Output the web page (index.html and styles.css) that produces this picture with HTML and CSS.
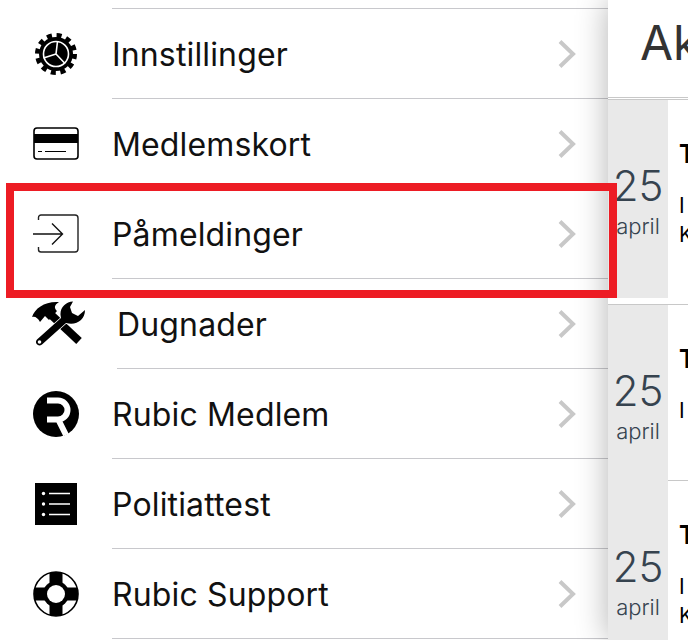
FILE: index.html
```html
<!doctype html>
<html>
  <head>
    <meta charset="UTF-8" />
    <title>Rubic</title>
    <link rel="stylesheet" href="styles.css">
  </head>
  <body>
    <div class="app">
      <!-- side menu -->
      <div class="menu">
        <div class="menu-top"></div>

        <div class="menu-row">
          <div class="menu-icon">
            <svg width="46" height="46" viewBox="0 0 46 46">
              <circle cx="23" cy="23" r="18.5" fill="none" stroke="#000" stroke-width="5" stroke-dasharray="5 4.69" />
              <circle cx="23" cy="23" r="17" fill="#000" />
              <circle cx="23" cy="23" r="12.5" fill="none" stroke="#fff" stroke-width="1.6" />
              <path d="M23 23 L24.5 10.5 M23 23 L10.5 27 M23 23 L32 32.5" stroke="#fff" stroke-width="1.6" fill="none" />
            </svg>
          </div>
          <div class="menu-body">
            <span class="menu-label">Innstillinger</span>
            <svg class="chevron" width="18" height="28" viewBox="0 0 18 28"><path d="M2 1.5 L15 14 L2 26.5" /></svg>
          </div>
        </div>

        <div class="menu-row">
          <div class="menu-icon">
            <svg width="46" height="34" viewBox="0 0 46 34">
              <rect x="1" y="1" width="44" height="31" rx="3" fill="none" stroke="#000" stroke-width="1.6" />
              <rect x="1" y="7" width="44" height="9" fill="#000" />
              <path d="M5 24.5 H9 M12 24.5 H33" stroke="#000" stroke-width="1.2" />
            </svg>
          </div>
          <div class="menu-body">
            <span class="menu-label">Medlemskort</span>
            <svg class="chevron" width="18" height="28" viewBox="0 0 18 28"><path d="M2 1.5 L15 14 L2 26.5" /></svg>
          </div>
        </div>

        <div class="menu-row">
          <div class="menu-icon">
            <svg width="46" height="40" viewBox="0 0 46 40">
              <path d="M5.5 6 V3.5 a2.5 2.5 0 0 1 2.5 -2.5 H42 a3 3 0 0 1 3 3 V35 a3 3 0 0 1 -3 3 H8 a2.5 2.5 0 0 1 -2.5 -2.5 V33" fill="none" stroke="#222" stroke-width="1.4" />
              <path d="M0 20 H29 M19 9.5 L29.5 20 L19 30.5" fill="none" stroke="#111" stroke-width="1.4" />
            </svg>
          </div>
          <div class="menu-body">
            <span class="menu-label">Påmeldinger</span>
            <svg class="chevron" width="18" height="28" viewBox="0 0 18 28"><path d="M2 1.5 L15 14 L2 26.5" /></svg>
          </div>
        </div>

        <div class="menu-row menu-row-wide">
          <div class="menu-icon">
            <svg width="54" height="46" viewBox="0 0 54 46">
              <!-- hammer -->
              <path d="M15 10 L47 40" stroke="#000" stroke-width="8" fill="none" />
              <path d="M0 16 C3 7 13 0 27 1 C22 4 22 7 25 10 L17 19 L13 15 L8 21 C6 17 3 15 0 16 Z" fill="#000" />
              <!-- wrench -->
              <path d="M41 0.5 C34 1 28 6 28.5 14 L29 17 L5 38.5 C2 42 6 46.5 10 43.5 L34 22 C44 25 53 19 53 9 L46 15 L40 12 L38 6 Z" fill="#000" stroke="#fff" stroke-width="1.5" paint-order="stroke" />
              <circle cx="7.5" cy="41" r="1.8" fill="#fff" />
            </svg>
          </div>
          <div class="menu-body">
            <span class="menu-label">Dugnader</span>
            <svg class="chevron" width="18" height="28" viewBox="0 0 18 28"><path d="M2 1.5 L15 14 L2 26.5" /></svg>
          </div>
        </div>

        <div class="menu-row">
          <div class="menu-icon">
            <svg width="46" height="46" viewBox="0 0 46 46">
              <circle cx="23" cy="23" r="23" fill="#000" />
              <path d="M14 9.5 H25 a9.5 9.5 0 0 1 0 19 H14 M25 28 L33 44" fill="none" stroke="#fff" stroke-width="6" />
            </svg>
          </div>
          <div class="menu-body">
            <span class="menu-label">Rubic Medlem</span>
            <svg class="chevron" width="18" height="28" viewBox="0 0 18 28"><path d="M2 1.5 L15 14 L2 26.5" /></svg>
          </div>
        </div>

        <div class="menu-row">
          <div class="menu-icon">
            <svg width="42" height="42" viewBox="0 0 42 42">
              <rect width="42" height="42" fill="#000" />
              <circle cx="8.5" cy="10.5" r="1.7" fill="#fff" />
              <circle cx="8.5" cy="21" r="1.7" fill="#fff" />
              <circle cx="8.5" cy="31.5" r="1.7" fill="#fff" />
              <path d="M14 10.5 H35 M14 21 H35 M14 31.5 H35" stroke="#fff" stroke-width="1.5" />
            </svg>
          </div>
          <div class="menu-body">
            <span class="menu-label">Politiattest</span>
            <svg class="chevron" width="18" height="28" viewBox="0 0 18 28"><path d="M2 1.5 L15 14 L2 26.5" /></svg>
          </div>
        </div>

        <div class="menu-row">
          <div class="menu-icon">
            <svg width="46" height="46" viewBox="0 0 46 46">
              <clipPath id="buoy"><circle cx="23" cy="23" r="22" /></clipPath>
              <circle cx="23" cy="23" r="22" fill="#fff" stroke="#000" stroke-width="1.6" />
              <g clip-path="url(#buoy)">
                <rect x="16.5" y="0" width="13" height="46" fill="#000" />
                <rect x="0" y="16.5" width="46" height="13" fill="#000" />
              </g>
              <circle cx="23" cy="23" r="13" fill="#000" />
              <circle cx="23" cy="23" r="9" fill="#fff" />
            </svg>
          </div>
          <div class="menu-body">
            <span class="menu-label">Rubic Support</span>
            <svg class="chevron" width="18" height="28" viewBox="0 0 18 28"><path d="M2 1.5 L15 14 L2 26.5" /></svg>
          </div>
        </div>
      </div>

      <!-- main panel -->
      <div class="panel">
        <div class="panel-header">Ak</div>

        <div class="event event-first">
          <div class="event-date">
            <span class="event-day">25</span>
            <span class="event-month">april</span>
          </div>
          <div class="event-info">
            <div class="event-title">T</div>
            <div class="event-text">I<br />K</div>
          </div>
        </div>

        <div class="event event-second">
          <div class="event-date">
            <span class="event-day">25</span>
            <span class="event-month">april</span>
          </div>
          <div class="event-info">
            <div class="event-title">T</div>
            <div class="event-text">I</div>
          </div>
        </div>

        <div class="event">
          <div class="event-date">
            <span class="event-day">25</span>
            <span class="event-month">april</span>
          </div>
          <div class="event-info">
            <div class="event-title">T</div>
            <div class="event-text">I<br />K</div>
          </div>
        </div>
      </div>

      <!-- highlight -->
      <div class="highlight"></div>
    </div>
  </body>
</html>
```

FILE: styles.css
```css
html,
body {
  margin: 0;
  height: 100%;
  overflow: hidden;
  background: #fff;
}

body {
  font-family: 'Inter', 'Liberation Sans', sans-serif;
  color: #000;
}

.app {
  position: relative;
  display: flex;
  width: 688px;
  height: 640px;
  overflow: hidden;
}

/* menu */
.menu {
  flex: 0 0 608px;
  width: 608px;
}
.menu-top {
  height: 8px;
  margin-left: 112px;
  border-bottom: 1px solid #c8c8cc;
}
.menu-row {
  display: flex;
  height: 90px;
}
.menu-icon {
  flex: 0 0 112px;
  display: flex;
  align-items: center;
  justify-content: center;
  padding-bottom: 1px;
  box-sizing: border-box;
}
.menu-row-wide .menu-icon {
  flex-basis: 117px;
}
.menu-body {
  flex: 1;
  display: flex;
  align-items: center;
  justify-content: space-between;
  padding-right: 32px;
  border-bottom: 1px solid #c8c8cc;
}
.menu-label {
  padding-top: 2px;
  font-size: 32px;
  font-weight: 400;
  letter-spacing: 0.15px;
  color: #111;
}
.chevron {
  fill: none;
  stroke: #c8c8c8;
  stroke-width: 4;
}

/* panel */
.panel {
  position: relative;
  flex: 1;
  background: #fff;
  box-shadow: 0 0 32px rgba(0, 0, 0, 0.3);
}
.panel-header {
  height: 97px;
  padding-left: 32px;
  line-height: 86px;
  font-size: 48px;
  color: #333;
  border-bottom: 3px double #c8c8c8;
  white-space: nowrap;
}
.event {
  display: flex;
  height: 176px;
}
.event-first {
  height: 198px;
  padding-bottom: 6px;
  border-bottom: 1px solid #c8c8c8;
}
.event-date {
  flex: 0 0 60px;
  display: flex;
  flex-direction: column;
  align-items: center;
  padding-top: 61px;
  box-sizing: border-box;
  background: #e9e9e9;
  color: #36434f;
}
.event-day {
  font-size: 42px;
  font-weight: 300;
  line-height: 50px;
}
.event-month {
  font-size: 22px;
  font-weight: 300;
  line-height: 30px;
}
.event-info {
  flex: 1;
  padding: 38px 0 0 11px;
}
.event-second .event-info {
  border-bottom: 1px solid #c8c8c8;
}
.event-title {
  font-size: 25px;
  font-weight: 700;
  line-height: 32px;
}
.event-text {
  margin-top: 21px;
  font-size: 21px;
  line-height: 29px;
}

/* red box on top of the menu row */
.highlight {
  position: absolute;
  left: 6px;
  top: 183px;
  width: 595px;
  height: 99px;
  border: 8px solid #ed1c24;
}
```
